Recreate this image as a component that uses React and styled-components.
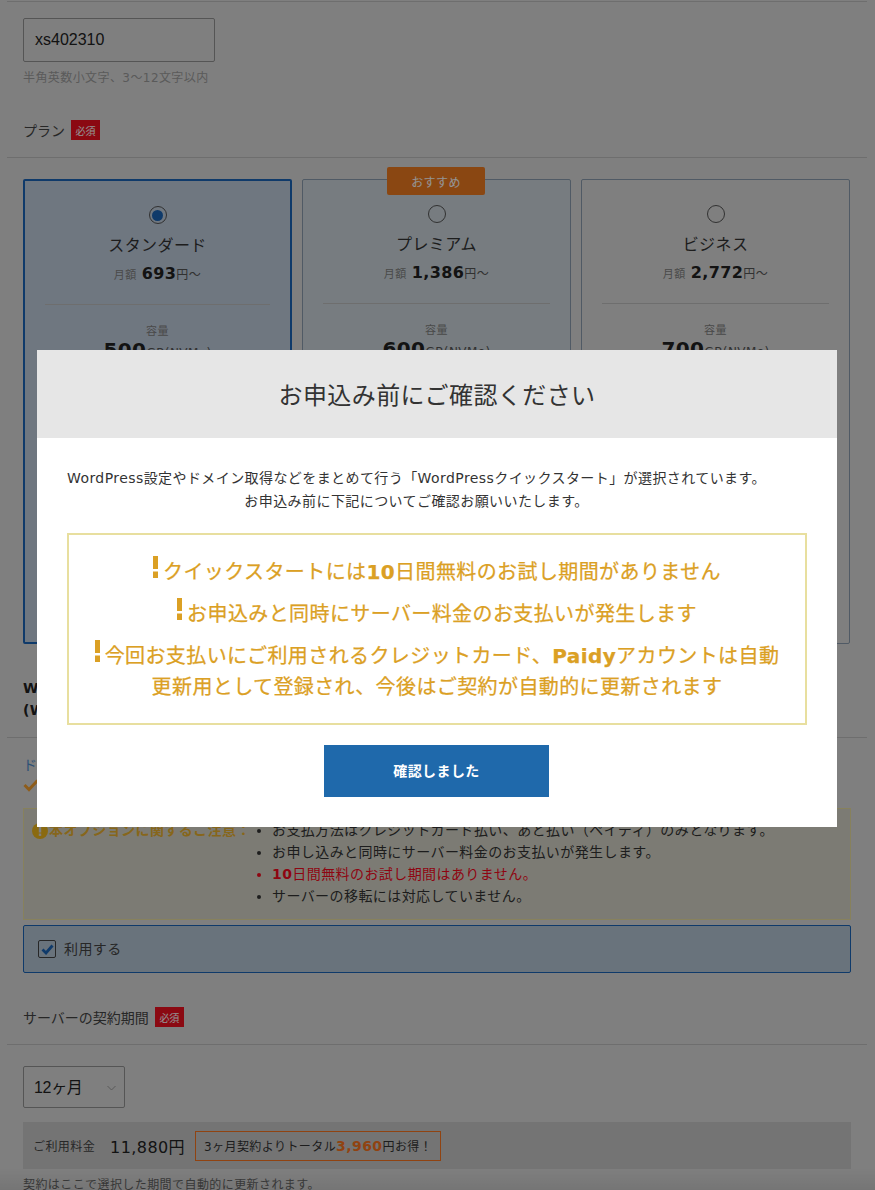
import React from "react"
import styled, { createGlobalStyle } from "styled-components"

const GlobalStyle = createGlobalStyle`
  html, body {
    margin: 0;
    height: 1190px;
    overflow: hidden;
    background: #dbdbdb;
  }
  body {
    font-family: "DejaVu Sans", "Noto Sans CJK JP", sans-serif;
    color: #3a3a3a;
    font-size: 14px;
    letter-spacing: 0.03em;
  }
  * { box-sizing: border-box; }
`

const Page = styled.div`
  position: relative;
  height: 1190px;
  padding-top: 1px;
  overflow: hidden;
`

const Section = styled.div`
  margin: 0 8px 0 7px;
  border-top: 1px solid #bebebe;
`

const Fields = styled.div`
  padding: ${(p) => p.$pad};
`

const TextInput = styled.div`
  width: 192px;
  height: 44px;
  border: 1px solid #939393;
  border-radius: 2px;
  padding-left: 11px;
  display: flex;
  align-items: center;
  font: 16px "Liberation Sans", "Noto Sans CJK JP", sans-serif;
  letter-spacing: 0;
  color: #222;
`

const Hint = styled.p`
  margin: 8px 0 0;
  font-size: 12px;
  line-height: 16px;
  color: #9b9b9b;
`

const Heading = styled.div`
  display: flex;
  align-items: center;
  gap: 6px;
  height: 20px;
  padding-left: 16px;
  margin: ${(p) => p.$margin};
  font-size: 14px;
  letter-spacing: 0;
  color: #444;
`

const Required = styled.span`
  width: 29px;
  height: 20px;
  background: #f0101f;
  color: #fff;
  font-size: 10px;
  display: flex;
  align-items: center;
  justify-content: center;
`

const Plans = styled.div`
  display: grid;
  grid-template-columns: repeat(3, 269px);
  gap: 10px;
  margin: 21px 0 0 16px;
`

const PlanCard = styled.div`
  position: relative;
  height: 465px;
  border: ${(p) => (p.$active ? "2px solid #1a64b7" : "1px solid #8a9cae")};
  border-radius: 2px;
  padding: 25px 20px 0;
  text-align: center;
  background: ${(p) => p.$bg};
`

const Ribbon = styled.span`
  position: absolute;
  top: -13px;
  left: 84px;
  width: 98px;
  height: 28px;
  border-radius: 2px;
  background: #ee7a20;
  color: #fff;
  font-size: 12px;
  display: flex;
  align-items: center;
  justify-content: center;
`

const Radio = styled.span`
  display: flex;
  align-items: center;
  justify-content: center;
  width: 18px;
  height: 18px;
  margin: 0 auto;
  border: 1px solid #555;
  border-radius: 50%;
  &::after {
    content: "";
    display: ${(p) => (p.$checked ? "block" : "none")};
    width: 11px;
    height: 11px;
    border-radius: 50%;
    background: #1a64b7;
  }
`

const PlanName = styled.div`
  margin-top: 10px;
  font-size: 16px;
  line-height: 24px;
  color: #333;
`

const PlanPrice = styled.div`
  margin-top: 5px;
  font-size: 11px;
  line-height: 22px;
  color: #808080;
  b {
    font-size: 16px;
    color: #222;
    margin-left: 5px;
  }
  span {
    font-size: 12px;
    color: #555;
  }
`

const Rule = styled.hr`
  border: 0;
  border-top: 1px solid #bebebe;
  margin: 17px 0 0;
`

const CapacityLabel = styled.div`
  margin-top: 20px;
  font-size: 11px;
  line-height: 14px;
  color: #808080;
`

const Capacity = styled.div`
  margin-top: -2px;
  font-size: 12px;
  line-height: 26px;
  color: #555;
  b {
    font-size: 20px;
    color: #222;
  }
`

const Quick = styled.div`
  margin: 33px 0 16px 16px;
  font-size: 14px;
  line-height: 22px;
  font-weight: 700;
  color: #222;
`

const DomainLink = styled.div`
  height: 23px;
  margin-top: 17px;
  padding-left: 16px;
  font-size: 14px;
  line-height: 20px;
  color: #4f8ccc;
`

const Checked = styled.div`
  height: 30px;
  padding-left: 16px;
  color: #f5a030;
  font-size: 14px;
`

const Notice = styled.div`
  display: flex;
  margin: 0 16px;
  height: 112px;
  padding: 10px 8px 0;
  border: 1px solid #e8df9f;
  background: #d6d5c8;
`

const NoticeTitle = styled.div`
  display: flex;
  align-items: flex-start;
  gap: 1px;
  width: 215px;
  font-size: 14px;
  line-height: 22px;
  font-weight: 700;
  color: #e8b030;
  white-space: nowrap;
`

const WarnIcon = styled.svg`
  flex: none;
  margin-top: 4px;
`

const NoticeList = styled.ul`
  margin: 0;
  padding: 0 0 0 25px;
  font-size: 14px;
  line-height: 22px;
  color: #333;
  white-space: nowrap;
  b { font-weight: 700; }
`

const Danger = styled.li`
  color: #f50a1e;
`

const UseOption = styled.label`
  display: flex;
  align-items: center;
  gap: 8px;
  height: 48px;
  margin: 5px 16px 0;
  padding-left: 14px;
  border: 1px solid #1a64b7;
  border-radius: 2px;
  background: #b6c7d6;
  font-size: 14px;
  color: #444;
`

const UseText = styled.span`
  margin-bottom: 3px;
`

const CheckBox = styled.span`
  width: 18px;
  height: 18px;
  border: 1px solid #444;
  border-radius: 2px;
  display: flex;
  align-items: center;
  justify-content: center;
  color: #1a64b7;
`

const Select = styled.div`
  display: flex;
  align-items: center;
  justify-content: space-between;
  width: 102px;
  height: 42px;
  padding: 0 8px 3px 10px;
  border: 1px solid #939393;
  border-radius: 2px;
  font: 16px "Liberation Sans", "Noto Sans CJK JP", sans-serif;
  letter-spacing: -0.02em;
  color: #222;
`

const Chevron = styled.svg`
  margin-top: 4px;
`

const FeeBar = styled.div`
  display: flex;
  align-items: center;
  height: 47px;
  margin-top: 14px;
  padding-left: 10px;
  background: #c8c8c8;
  font-size: 12px;
  color: #444;
`

const FeeAmount = styled.span`
  margin-left: 15px;
  font-size: 16px;
  color: #222;
`

const Saving = styled.span`
  display: flex;
  align-items: center;
  height: 30px;
  margin-left: 10px;
  padding: 0 8px;
  border: 1px solid #f8741e;
  font-size: 12px;
  color: #333;
  white-space: nowrap;
  b {
    font-size: 14px;
    color: #f8741e;
  }
`

const RenewNote = styled.p`
  margin: 8px 0 0;
  font-size: 12px;
  line-height: 16px;
  color: #666;
`

const BottomShade = styled.div`
  position: absolute;
  left: 0;
  right: 0;
  bottom: 0;
  height: 22px;
  background: linear-gradient(to bottom, rgba(0, 0, 0, 0), rgba(0, 0, 0, 0.08));
`

const Overlay = styled.div`
  position: absolute;
  inset: 0;
  background: rgba(0, 0, 0, 0.42);
`

const Modal = styled.div`
  position: absolute;
  top: 350px;
  left: 37px;
  width: 800px;
  height: 477px;
  background: #fff;
`

const ModalHead = styled.h2`
  margin: 0;
  height: 88px;
  padding-bottom: 2px;
  display: flex;
  align-items: center;
  justify-content: center;
  background: #e6e6e6;
  font-size: 24px;
  font-weight: 400;
  color: #333;
`

const ModalBody = styled.div`
  padding: 29px 30px 0;
`

const Lead = styled.p`
  margin: 0 41px 0 0;
  text-align: center;
  font-size: 14px;
  line-height: 23px;
  color: #333;
  white-space: nowrap;
`

const WarnBox = styled.div`
  height: 192px;
  margin-top: 20px;
  padding: 21px 20px 0;
  border: 2px solid #e8df9f;
  text-align: center;
  color: #dba024;
  font-size: 20px;
  letter-spacing: 0.02em;
`

const WarnLine = styled.p`
  margin: 0 0 10px;
  line-height: 31px;
  -webkit-text-stroke: 0.25px #dba024;
  b { font-weight: 700; }
`

const Bang = styled.svg`
  width: 5px;
  height: 22px;
  margin-right: 5px;
  vertical-align: 1px;
  fill: #dba024;
`

const ConfirmButton = styled.button`
  display: block;
  width: 225px;
  height: 52px;
  margin: 20px 0 0 257px;
  border: 0;
  padding: 0 0 2px;
  background: #1f69ab;
  color: #fff;
  font-family: inherit;
  font-size: 14px;
  letter-spacing: 0.03em;
  font-weight: 700;
`

const plans = [
  { name: "スタンダード", price: "693", size: "500", bg: "#c0cddc", active: true },
  { name: "プレミアム", price: "1,386", size: "600", bg: "#cdd6dc", recommended: true },
  { name: "ビジネス", price: "2,772", size: "700", bg: "#dbdbdb" },
]

const WarnMark = () => (
  <Bang viewBox="0 0 5 22">
    <rect width="5" height="13" />
    <rect y="15.5" width="5" height="6.5" />
  </Bang>
)

const App = () => (
  <Page>
    <GlobalStyle />
    <Section>
      <Fields $pad="16px 16px 0">
        <TextInput>xs402310</TextInput>
        <Hint>半角英数小文字、3〜12文字以内</Hint>
      </Fields>
      <Heading $margin="34px 0 17px">
        プラン<Required>必須</Required>
      </Heading>
    </Section>
    <Section>
      <Plans>
        {plans.map((plan) => (
          <PlanCard key={plan.name} $active={plan.active} $bg={plan.bg}>
            {plan.recommended && <Ribbon>おすすめ</Ribbon>}
            <Radio $checked={plan.active} />
            <PlanName>{plan.name}</PlanName>
            <PlanPrice>
              月額<b>{plan.price}</b>
              <span>円〜</span>
            </PlanPrice>
            <Rule />
            <CapacityLabel>容量</CapacityLabel>
            <Capacity>
              <b>{plan.size}</b>GB(NVMe)
            </Capacity>
          </PlanCard>
        ))}
      </Plans>
      <Quick>
        WordPressクイックスタート
        <br />
        (WordPress簡単インストール)
      </Quick>
    </Section>
    <Section>
      <DomainLink>ドメイン</DomainLink>
      <Checked>
        <svg width="16" height="14" viewBox="0 0 16 14" fill="none" stroke="currentColor" strokeWidth="3">
          <path d="M1.5 7l4.5 4.5 8.5-9" />
        </svg>
      </Checked>
      <Notice>
        <NoticeTitle>
          <WarnIcon width="16" height="16" viewBox="0 0 16 16">
            <circle cx="8" cy="8" r="8" fill="#eeb71c" />
            <rect x="6.8" y="3" width="2.4" height="6.5" fill="#dbdbdb" />
            <rect x="6.8" y="10.5" width="2.4" height="2.4" fill="#dbdbdb" />
          </WarnIcon>
          本オプションに関するご注意：
        </NoticeTitle>
        <NoticeList>
          <li>お支払方法はクレジットカード払い、あと払い（ペイディ）のみとなります。</li>
          <li>お申し込みと同時にサーバー料金のお支払いが発生します。</li>
          <Danger>
            <b>10</b>日間無料のお試し期間はありません。
          </Danger>
          <li>サーバーの移転には対応していません。</li>
        </NoticeList>
      </Notice>
      <UseOption>
        <CheckBox>
          <svg width="13" height="11" viewBox="0 0 13 11" fill="none" stroke="currentColor" strokeWidth="2.8">
            <path d="M1.5 5.5l3.5 3.5 6.5-7.5" />
          </svg>
        </CheckBox>
        <UseText>利用する</UseText>
      </UseOption>
      <Heading $margin="34px 0 17px">
        サーバーの契約期間<Required>必須</Required>
      </Heading>
    </Section>
    <Section>
      <Fields $pad="21px 16px 0">
        <Select>
          12ヶ月
          <Chevron width="9" height="6" viewBox="0 0 9 6" fill="none" stroke="#999" strokeWidth="1">
            <path d="M.5 1l4 4 4-4" />
          </Chevron>
        </Select>
        <FeeBar>
          ご利用料金
          <FeeAmount>11,880円</FeeAmount>
          <Saving>
            3ヶ月契約よりトータル<b>3,960</b>円お得！
          </Saving>
        </FeeBar>
        <RenewNote>契約はここで選択した期間で自動的に更新されます。</RenewNote>
      </Fields>
    </Section>
    <BottomShade />
    <Overlay />
    <Modal>
      <ModalHead>お申込み前にご確認ください</ModalHead>
      <ModalBody>
        <Lead>
          WordPress設定やドメイン取得などをまとめて行う「WordPressクイックスタート」が選択されています。
          <br />
          お申込み前に下記についてご確認お願いいたします。
        </Lead>
        <WarnBox>
          <WarnLine>
            <WarnMark />
            クイックスタートには<b>10</b>日間無料のお試し期間がありません
          </WarnLine>
          <WarnLine>
            <WarnMark />
            お申込みと同時にサーバー料金のお支払いが発生します
          </WarnLine>
          <WarnLine>
            <WarnMark />
            今回お支払いにご利用されるクレジットカード、<b>Paidy</b>アカウントは自動更新用として登録され、今後はご契約が自動的に更新されます
          </WarnLine>
        </WarnBox>
        <ConfirmButton>確認しました</ConfirmButton>
      </ModalBody>
    </Modal>
  </Page>
)

export default App
